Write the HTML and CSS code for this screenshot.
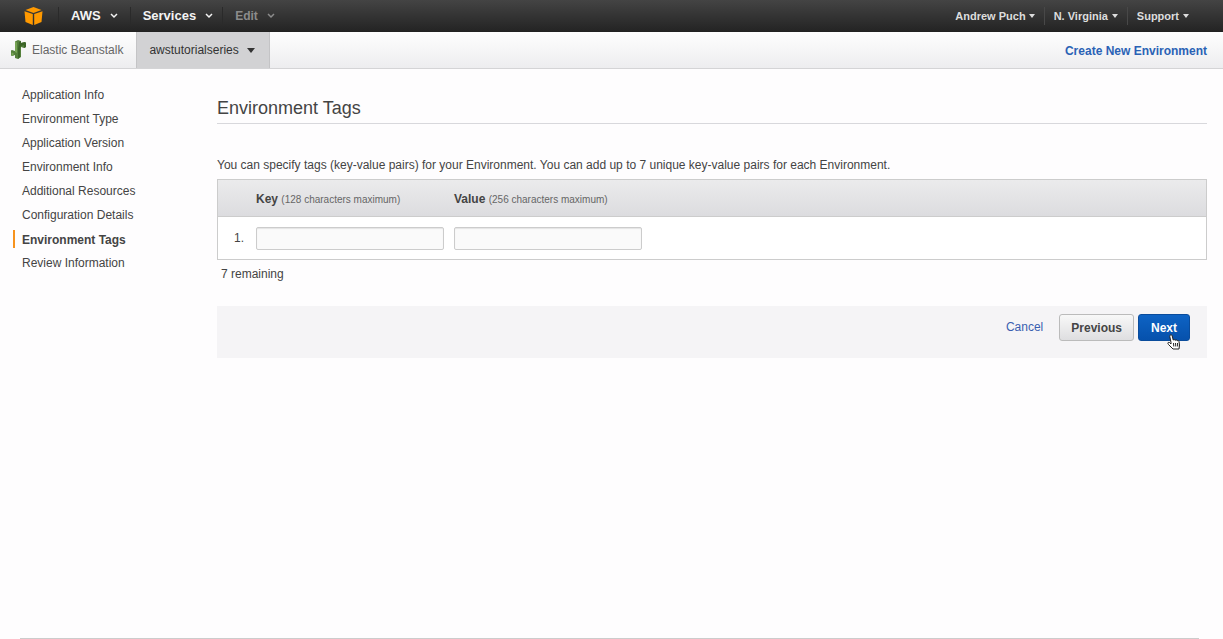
FILE: index.html
```html
<!DOCTYPE html>
<html lang="en">
<head>
<meta charset="utf-8">
<title>Elastic Beanstalk - Environment Tags</title>
<link rel="stylesheet" href="styles.css">
</head>
<body>
<header class="topbar">
  <a class="logo" href="#" aria-label="Console home">
    <svg width="20" height="18" viewBox="0 0 20 18"><path fill="#f90" d="M1.500 3 9.500 0l8 3-8 3zM.5 4.200 8.800 7v11L1.500 15zM18.500 4.200 10.200 7v11l7.300-3z"/></svg>
  </a>
  <nav class="menus">
    <button class="menu" type="button">AWS <svg class="chev" viewBox="0 0 8 6"><path d="M1 1l3 3 3-3"/></svg></button>
    <button class="menu" type="button">Services <svg class="chev" viewBox="0 0 8 6"><path d="M1 1l3 3 3-3"/></svg></button>
    <button class="menu menu-edit" type="button">Edit <svg class="chev" viewBox="0 0 8 6"><path d="M1 1l3 3 3-3"/></svg></button>
  </nav>
  <nav class="account">
    <button class="acct" type="button">Andrew Puch <svg class="chev-small" viewBox="0 0 6 4"><path d="M0 0h6L3 4z"/></svg></button>
    <button class="acct" type="button">N. Virginia <svg class="chev-small" viewBox="0 0 6 4"><path d="M0 0h6L3 4z"/></svg></button>
    <button class="acct" type="button">Support <svg class="chev-small" viewBox="0 0 6 4"><path d="M0 0h6L3 4z"/></svg></button>
  </nav>
</header>
<div class="servicebar">
  <a class="service" href="#">
    <svg width="16" height="20" viewBox="0 0 16 20"><path fill="#55803c" d="M4 1.500 7 0l3 1v2l4-1 1 1v4l-2 1-3-1v10l-3 2-3-1v-3l-3 1-2-1v-4l2-1 3 1z"/><path fill="#77a455" d="M4 1.500l2 1V13l-2-1zM.5 12.500l2 .5v3l-2-1z"/><path fill="#3c6528" d="M8 2l2-1v2l4-1 1 1v4l-2 1V5l-3 1-1 3v8l-2 2V9z"/></svg>
    Elastic Beanstalk
  </a>
  <button class="app" type="button">awstutorialseries <svg width="8" height="5" viewBox="0 0 8 5"><path fill="#333" d="M0 0h8L4 5z"/></svg></button>
  <a class="create" href="#">Create New Environment</a>
</div>
<div class="layout">
  <nav class="steps">
    <a href="#">Application Info</a>
    <a href="#">Environment Type</a>
    <a href="#">Application Version</a>
    <a href="#">Environment Info</a>
    <a href="#">Additional Resources</a>
    <a href="#">Configuration Details</a>
    <a class="current" href="#" aria-current="step">Environment Tags</a>
    <a href="#">Review Information</a>
  </nav>
  <main class="content">
    <h1>Environment Tags</h1>
    <p class="intro">You can specify tags (key-value pairs) for your Environment. You can add up to 7 unique key-value pairs for each Environment.</p>
    <table class="tags">
      <thead>
        <tr><th class="num"></th><th class="field" id="key" scope="col">Key <small>(128 characters maximum)</small></th><th id="value" scope="col">Value <small>(256 characters maximum)</small></th></tr>
      </thead>
      <tbody>
        <tr><td class="num">1.</td><td class="field"><input type="text" aria-labelledby="key"></td><td><input type="text" aria-labelledby="value"></td></tr>
      </tbody>
    </table>
    <p class="remaining">7 remaining</p>
    <div class="actions">
      <a class="cancel" href="#">Cancel</a>
      <button class="btn" type="button">Previous</button>
      <button class="btn primary" type="button">Next
        <svg class="pointer" width="14" height="16" viewBox="0 0 14 16"><path fill="#fff" stroke="#222" d="M4 8.500 2.800 2.500Q2.700 1 3.800.8T5.200 1.800L6.200 6q1-1 2 .2 1.200-.8 2 .4 1.500-.5 1.800 1l.5 3.400-.5 4H6L1.500 10.500Q.3 9 1.300 8.400T4 10zM6.500 9l.3 3.500M8.500 9l.3 3.500M10.500 9l.2 3.500"/></svg>
      </button>
    </div>
  </main>
</div>
<footer class="footer"></footer>
</body>
</html>
```
FILE: styles.css
```css
* { box-sizing: border-box; }
body {
  margin: 0;
  min-height: 100vh;
  display: flex;
  flex-direction: column;
  background: #fefdfe;
  color: #444;
  font: 12px/16px "Liberation Sans", Arial, sans-serif;
}
a { color: inherit; text-decoration: none; }
button { font: inherit; color: inherit; cursor: pointer; }

.topbar {
  display: flex;
  align-items: center;
  height: 32px;
  padding: 0 25px 0 24px;
  background: linear-gradient(#444, #242424);
  border-bottom: 1px solid #222;
}
.logo { display: flex; width: 34px; }
.menus, .account { display: flex; }
.account { margin-left: auto; }
.menu, .acct {
  display: flex;
  align-items: center;
  height: 18px;
  border: 0;
  background: none;
  color: #f4f4f4;
  font-weight: bold;
  white-space: nowrap;
}
.menu { gap: 9px; padding: 0 9px 0 12px; border-left: 1px solid #2a2a2a; font-size: 13px; }
.menu:first-child { padding-right: 12px; }
.menu-edit { color: #8c8c8c; font-size: 12px; }
.acct { gap: 4px; padding: 0 9px; color: #ddd; font-size: 11px; }
.acct + .acct { border-left: 1px solid #484848; }
.acct:first-child { gap: 3px; }
.chev { width: 8px; height: 6px; fill: none; stroke: currentColor; stroke-width: 1.5; }
.chev-small { width: 6px; height: 4px; fill: currentColor; }

.servicebar {
  display: flex;
  align-items: stretch;
  height: 37px;
  padding-right: 16px;
  background: linear-gradient(#fefefe, #ededef);
  border-bottom: 1px solid #d4d4d6;
}
.service { display: flex; align-items: center; gap: 5px; padding: 0 13px 0 11px; color: #666; }
.app {
  display: flex;
  align-items: center;
  gap: 8px;
  padding: 0 14px 0 12px;
  border: 1px solid #c4c4c6;
  border-width: 0 1px;
  background: #d2d2d4;
  color: #333;
}
.create { margin: auto 0 auto auto; padding-top: 2px; color: #2a62b5; font-weight: bold; }

.layout { display: flex; flex: 1; padding: 15px 16px 0 13px; }
.steps { display: flex; flex-direction: column; flex: 0 0 204px; }
.steps a { height: 24px; padding: 3px 0 0 9px; }
.steps .current {
  height: 18px;
  margin: 2px 0 4px;
  padding: 2px 0 0 7px;
  border-left: 2px solid #f7931e;
  font-weight: bold;
}
.content { flex: 1; min-width: 0; }
h1 {
  margin: 0;
  padding: 12px 0 3px;
  border-bottom: 1px solid #d8d8dc;
  color: #444;
  font-size: 18px;
  font-weight: normal;
  line-height: 24px;
}
p { margin: 0; }
.intro { padding: 33px 0 6px; }
.tags { width: 100%; border: 1px solid #ccc; border-spacing: 0; background: #fff; }
.tags th, .tags td { padding: 0; text-align: left; }
.tags th { height: 37px; padding-top: 2px; background: linear-gradient(#ebebec, #dcdcdf); border-bottom: 1px solid #ccc; }
.tags td { height: 42px; }
.tags .num { width: 38px; padding-left: 16px; }
.tags .field { width: 198px; }
.tags small { color: #666; font-size: 10px; font-weight: normal; }
.tags input {
  display: block;
  width: 188px;
  height: 23px;
  padding: 0 6px;
  border: 1px solid #ccc;
  border-radius: 2px;
  background: #fafafa;
  box-shadow: inset 0 1px 1px #e4e4e4;
  font: inherit;
}
.remaining { padding: 6px 4px 0; }
.actions {
  display: flex;
  align-items: flex-start;
  justify-content: flex-end;
  gap: 4px;
  margin-top: 24px;
  padding: 8px 17px 17px;
  background: #f5f4f6;
}
.cancel { margin: 5px 12px 0 0; color: #3a5fb0; }
.btn {
  position: relative;
  height: 27px;
  padding: 0 11px;
  border: 1px solid #bbb;
  border-radius: 3px;
  background: linear-gradient(#f8f8f8, #dedee0);
  font-weight: bold;
}
.primary { padding: 0 12px; border-color: #0a4c9c; background: linear-gradient(#0e63c4, #0651ac); color: #fff; }
.pointer { position: absolute; left: 28px; top: 19px; }
.footer { height: 1px; margin: 0 24px 0 20px; background: #ccc; }
```
